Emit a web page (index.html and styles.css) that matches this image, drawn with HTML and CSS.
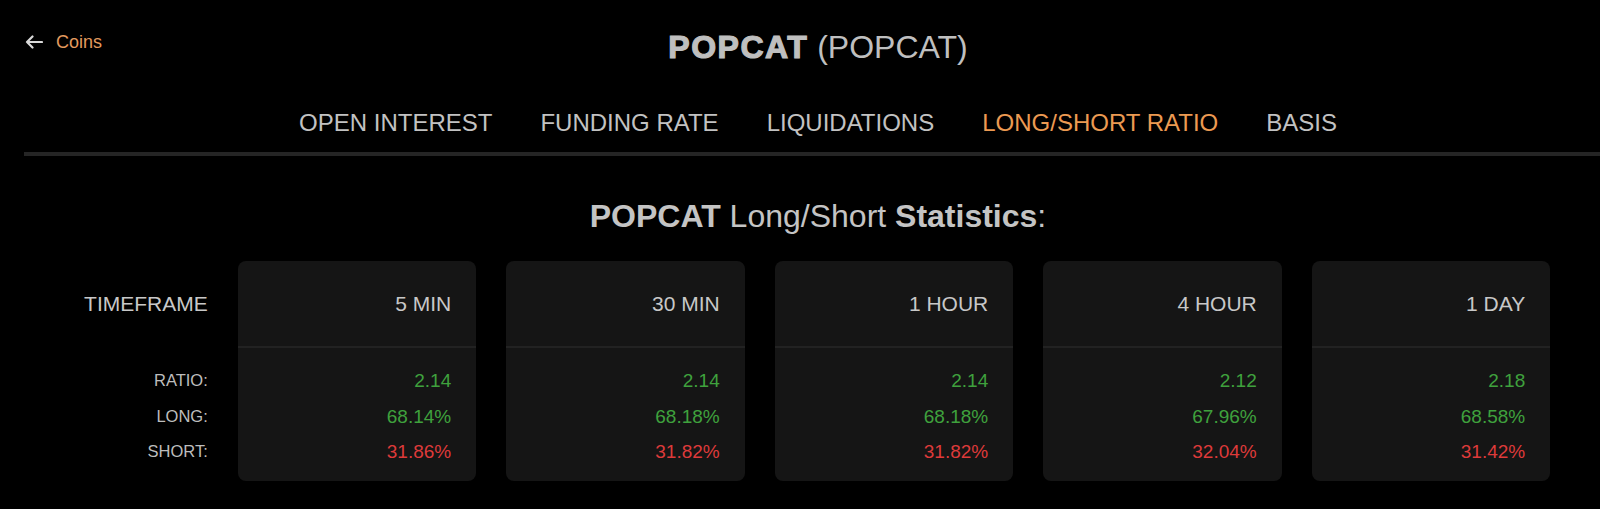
FILE: index.html
```html
<!DOCTYPE html>
<html lang="en">
<head>
<meta charset="utf-8">
<title>POPCAT (POPCAT) Long/Short Ratio</title>
<link rel="stylesheet" href="styles.css">
</head>
<body>
<div class="page">
  <header class="top">
    <a class="back" href="#">
      <svg class="back-icon" viewBox="0 0 18 14" width="18" height="14" aria-hidden="true">
        <path d="M17 7H2M7.5 1.5L2 7l5.5 5.5" fill="none" stroke="#d9d9d9" stroke-width="2.2" stroke-linecap="round" stroke-linejoin="round"/>
      </svg>
      <span>Coins</span>
    </a>
    <h1 class="title"><b>POPCAT</b> (POPCAT)</h1>
    <div class="spacer"></div>
  </header>

  <nav class="tabs">
    <a href="#" class="tab">OPEN INTEREST</a>
    <a href="#" class="tab">FUNDING RATE</a>
    <a href="#" class="tab">LIQUIDATIONS</a>
    <a href="#" class="tab active">LONG/SHORT RATIO</a>
    <a href="#" class="tab">BASIS</a>
  </nav>

  <h2 class="heading"><b>POPCAT</b> Long/Short <b>Statistics</b>:</h2>

  <section class="stats">
    <div class="col labels">
      <div class="col-head">TIMEFRAME</div>
      <div class="col-body">
        <div class="row">RATIO:</div>
        <div class="row">LONG:</div>
        <div class="row">SHORT:</div>
      </div>
    </div>

    <div class="col card">
      <div class="col-head">5 MIN</div>
      <div class="col-body">
        <div class="row up">2.14</div>
        <div class="row up">68.14%</div>
        <div class="row down">31.86%</div>
      </div>
    </div>

    <div class="col card">
      <div class="col-head">30 MIN</div>
      <div class="col-body">
        <div class="row up">2.14</div>
        <div class="row up">68.18%</div>
        <div class="row down">31.82%</div>
      </div>
    </div>

    <div class="col card">
      <div class="col-head">1 HOUR</div>
      <div class="col-body">
        <div class="row up">2.14</div>
        <div class="row up">68.18%</div>
        <div class="row down">31.82%</div>
      </div>
    </div>

    <div class="col card">
      <div class="col-head">4 HOUR</div>
      <div class="col-body">
        <div class="row up">2.12</div>
        <div class="row up">67.96%</div>
        <div class="row down">32.04%</div>
      </div>
    </div>

    <div class="col card">
      <div class="col-head">1 DAY</div>
      <div class="col-body">
        <div class="row up">2.18</div>
        <div class="row up">68.58%</div>
        <div class="row down">31.42%</div>
      </div>
    </div>
  </section>
</div>
</body>
</html>
```

FILE: styles.css
```css
* { box-sizing: border-box; }

html, body {
  margin: 0;
  padding: 0;
  background: #000;
  overflow: hidden;
}

body {
  font-family: "Liberation Sans", Arial, sans-serif;
  color: #c4c4c4;
}

a { text-decoration: none; color: inherit; }

.page {
  width: 1636px;
  padding: 0 24px;
}

/* header */
.top {
  display: grid;
  grid-template-columns: 1fr auto 1fr;
  align-items: start;
  padding-top: 27px;
}

.back {
  display: flex;
  align-items: center;
  gap: 13px;
  padding-top: 2px;
  line-height: 26px;
  font-size: 18px;
  color: #e39a5e;
}

.back-icon { display: block; margin-left: 1px; }

.title {
  margin: 0;
  font-size: 32px;
  line-height: 40px;
  font-weight: normal;
  color: #bfbfbf;
  white-space: nowrap;
}

.title b {
  font-weight: bold;
  letter-spacing: 1.5px;
  -webkit-text-stroke: 1.2px #bfbfbf;
}

/* tabs */
.tabs {
  display: flex;
  justify-content: center;
  gap: 48px;
  margin-top: 41px;
  padding-bottom: 14px;
  border-bottom: 4px solid #252525;
}

.tab {
  font-size: 24px;
  line-height: 30px;
  color: #c2c2c2;
}

.tab.active { color: #ec9a52; }

/* heading */
.heading {
  margin: 40px 0 0;
  text-align: center;
  font-size: 32px;
  line-height: 40px;
  font-weight: normal;
  color: #c4c4c4;
}

.heading b { font-weight: bold; }

/* stats */
.stats {
  display: grid;
  grid-template-columns: 122px repeat(5, 238.5px);
  column-gap: 30px;
  justify-content: center;
  margin-top: 25px;
}

.col {
  display: flex;
  flex-direction: column;
  text-align: right;
}

.card {
  background: #151515;
  border-radius: 8px;
  padding-bottom: 11px;
}

.col-head {
  height: 87px;
  display: flex;
  align-items: center;
  justify-content: flex-end;
  padding: 0 25px 0 0;
  font-size: 21px;
  color: #c8c8c8;
  white-space: nowrap;
  border-bottom: 2px solid #222;
}

.labels .col-head {
  padding-right: 0;
  border-bottom-color: transparent;
}

.col-body {
  padding: 15px 25px 0 0;
}

.labels .col-body { padding-right: 0; }

.row {
  height: 35.5px;
  line-height: 35.5px;
  font-size: 19px;
  white-space: nowrap;
}

.labels .row {
  font-size: 16.5px;
  color: #bdbdbd;
}

.up { color: #3fa13d; }
.down { color: #dd3a3a; }
```
